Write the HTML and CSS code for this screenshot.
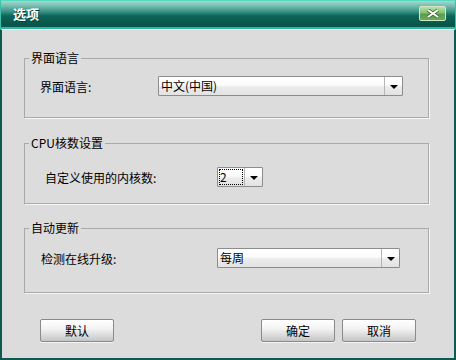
FILE: index.html
```html
<!DOCTYPE html>
<html>

<head>
    <meta charset="UTF-8">
    <link rel="stylesheet" href="styles.css">
    <title>选项</title>
</head>

<body>
    <div class="window">
        <div class="titlebar">
            <span class="title">选项</span>
            <button class="close">
                <svg width="14" height="9" viewBox="0 0 14 9">
                    <path d="M2 1 L12 8 M12 1 L2 8" stroke="#2f6a28" stroke-width="3.4" />
                    <path d="M2 1 L12 8 M12 1 L2 8" stroke="#fff" stroke-width="2" />
                </svg>
            </button>
        </div>
        <div class="content">
            <fieldset class="group group-lang">
                <legend>界面语言</legend>
                <div class="row">
                    <label>界面语言:</label>
                    <div class="combo combo-lang">
                        <span class="combo-text">中文(中国)</span>
                        <span class="combo-btn"><i class="arrow"></i></span>
                    </div>
                </div>
            </fieldset>
            <fieldset class="group group-cpu">
                <legend>CPU核数设置</legend>
                <div class="row">
                    <label>自定义使用的内核数:</label>
                    <div class="combo combo-cpu">
                        <span class="combo-text focus">2</span>
                        <span class="combo-btn"><i class="arrow"></i></span>
                    </div>
                </div>
            </fieldset>
            <fieldset class="group group-update">
                <legend>自动更新</legend>
                <div class="row">
                    <label>检测在线升级:</label>
                    <div class="combo combo-update">
                        <span class="combo-text">每周</span>
                        <span class="combo-btn"><i class="arrow"></i></span>
                    </div>
                </div>
            </fieldset>
            <div class="buttons">
                <button class="btn">默认</button>
                <span class="spacer"></span>
                <button class="btn">确定</button>
                <button class="btn">取消</button>
            </div>
        </div>
    </div>
</body>

</html>
```

FILE: styles.css
```css
body {
    margin: 0;
    font: 12px "Noto Sans CJK SC", "Liberation Sans", sans-serif;
    color: #000;
}

.window {
    width: 456px;
    height: 360px;
    display: flex;
    flex-direction: column;
    box-sizing: border-box;
}

.titlebar {
    height: 29px;
    box-sizing: border-box;
    display: flex;
    align-items: center;
    padding: 0 9px 2px 12px;
    border-top: 1px solid #56d9c1;
    border-left: 1px solid #3fbfa7;
    border-right: 1px solid #3fbfa7;
    border-bottom: 2px solid #2fb89d;
    background: linear-gradient(#a3d9ce 0px, #7fc2b5 4px, #3f978a 10px, #0d6559 15px, #075449 24px, #0a5a50 27px);
}

.title {
    color: #fff;
    font-weight: bold;
    font-size: 13px;
    text-shadow: 1px 1px 0 #0a3f38;
    flex: 1;
}

.close {
    width: 27px;
    height: 15px;
    margin-top: 0;
    padding: 0;
    border: 1px solid #cfe9c6;
    border-radius: 2px;
    background: linear-gradient(#b7deaa, #86c074 45%, #5d9c4c 55%, #6aa85a);
    display: flex;
    align-items: center;
    justify-content: center;
}

.content {
    flex: 1;
    background: #dcdcdc;
    border-top: 1px solid #fff;
    border-left: 2px solid #0d5a50;
    border-right: 2px solid #0d5a50;
    border-bottom: 2px solid #0d5a50;
    padding: 20px 25px 0 22px;
    display: flex;
    flex-direction: column;
}

.group {
    margin: 0;
    padding: 0 4px;
    border: 1px solid #a9a9a9;
    box-shadow: 1px 1px 0 #f6f6f6;
}

.group legend {
    padding: 0 2px;
    line-height: 16px;
    height: 16px;
}

.group-lang {
    padding-top: 10px;
    padding-bottom: 21px;
}

.group-cpu {
    margin-top: 17px;
    padding-top: 16px;
    padding-bottom: 16px;
}

.group-update {
    margin-top: 16px;
    padding-top: 12px;
    padding-bottom: 24px;
}

.row {
    display: flex;
    align-items: center;
    height: 20px;
}

.group-lang .row {
    padding-left: 11px;
}

.group-lang label {
    width: 118px;
}

.group-cpu .row {
    padding-left: 16px;
}

.group-cpu label {
    width: 172px;
}

.group-update .row {
    padding-left: 12px;
}

.group-update label {
    width: 176px;
}

.combo {
    height: 20px;
    box-sizing: border-box;
    display: flex;
    border: 1px solid #8c8c8c;
    border-radius: 1px;
    background: linear-gradient(#ffffff, #fbfbfb 45%, #ececec 55%, #e2e2e2);
}

.combo-lang {
    width: 245px;
}

.combo-cpu {
    width: 46px;
}

.combo-update {
    width: 183px;
}

.combo-text {
    flex: 1;
    padding-left: 2px;
    line-height: 18px;
}

.combo-text.focus {
    margin: 1px;
    padding-left: 1px;
    line-height: 16px;
    outline: 1px dotted #000;
    outline-offset: -1px;
}

.combo-btn {
    width: 17px;
    border-left: 1px solid #b5b5b5;
    display: flex;
    align-items: center;
    justify-content: center;
}

.arrow {
    width: 0;
    height: 0;
    border-left: 4px solid transparent;
    border-right: 4px solid transparent;
    border-top: 4px solid #000;
    margin-top: 1px;
}

.buttons {
    display: flex;
    gap: 7px;
    margin-top: 26px;
    padding: 0 13px 0 16px;
}

.spacer {
    flex: 1;
}

.btn {
    width: 74px;
    height: 23px;
    padding: 0;
    font: 12px "Noto Sans CJK SC", "Liberation Sans", sans-serif;
    color: #000;
    border: 1px solid #8a8a8a;
    border-radius: 2px;
    background: linear-gradient(#ffffff, #f4f4f4 40%, #d9d9d9 75%, #c4c4c4);
    box-shadow: 0 1px 0 #f4f4f4;
}
```
